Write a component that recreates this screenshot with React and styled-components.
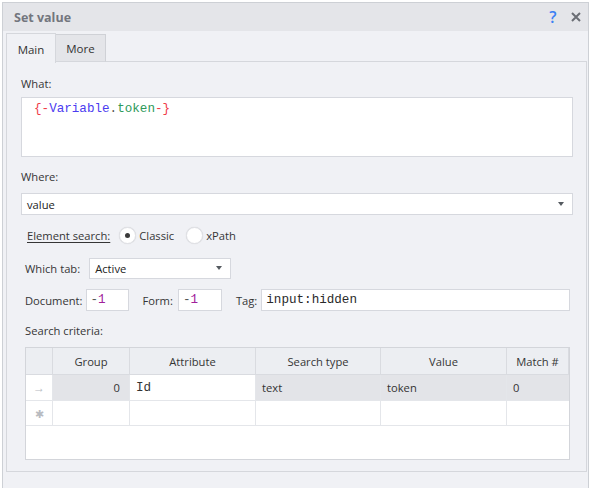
import React from 'react';
import styled, { createGlobalStyle } from 'styled-components';

const GlobalStyle = createGlobalStyle`
  html, body { margin: 0; padding: 0; background: #ffffff; }
  body {
    font-family: "Open Sans", "Noto Sans", sans-serif;
    font-size: 11.2px;
    color: #353535;
  }
  #root { width: 592px; height: 488px; overflow: hidden; }
  * { box-sizing: border-box; }
`;

const Window = styled.div`
  margin: 2px 0 0 2px;
  width: 587px;
  height: 486px;
  border: 1px solid #cdd0d5;
  border-bottom: none;
  background: #f0f1f5;
  display: flex;
  flex-direction: column;
`;

const TitleBar = styled.div`
  height: 28px;
  background: #e4e5e9;
  display: flex;
  align-items: center;
  padding: 0 5px 0 11px;
`;

const Title = styled.div`
  font-weight: 700;
  font-size: 12.5px;
  color: #73767e;
  flex: 1;
`;

const TitleButton = styled.span`
  display: flex;
  align-items: center;
  justify-content: center;
  width: ${p => p.$w || 16}px;
  height: 18px;
  margin-left: ${p => p.$ml || 0}px;
  color: ${p => p.$color};
  font-size: 16px;
  font-weight: 600;
`;

const TabStrip = styled.div`
  display: flex;
  align-items: flex-end;
  padding: 1px 0 0 3px;
  height: 31px;
  position: relative;
  z-index: 1;
`;

const Tab = styled.div`
  width: 50px;
  height: ${p => (p.$active ? 30 : 28)}px;
  display: flex;
  align-items: center;
  justify-content: center;
  padding-top: ${p => (p.$active ? 1 : 0)}px;
  background: ${p => (p.$active ? '#f0f1f5' : '#e4e5e9')};
  border: 1px solid ${p => (p.$active ? '#d5d7dc' : '#cfd1d6')};
  border-bottom: ${p => (p.$active ? 'none' : '1px solid #d5d7dc')};
  border-left: ${p => (p.$active ? '1px solid #d5d7dc' : 'none')};
  margin-bottom: ${p => (p.$active ? -1 : 0)}px;
  color: #333;
  font-size: 11.5px;
`;

const Panel = styled.div`
  margin: -1px 1px 0 3px;
  height: 411px;
  border: 1px solid #d5d7dc;
  padding: 14px 13px 0 14px;
  display: flex;
  flex-direction: column;
`;

const Label = styled.div`
  line-height: 16px;
  height: 16px;
  margin-top: ${p => p.$mt || 0}px;
  color: #353535;
`;

const TextArea = styled.div`
  margin-top: 5px;
  height: 60px;
  background: #ffffff;
  border: 1px solid #d6d8de;
  padding: 4px 12px;
  font-family: "Liberation Mono", "Courier New", monospace;
  font-size: 12.6px;
  line-height: 14px;
`;

const Tok = styled.span`
  color: ${p => p.$c};
`;

const Select = styled.div`
  margin-top: ${p => p.$mt || 0}px;
  width: ${p => (p.$w ? `${p.$w}px` : 'auto')};
  height: ${p => p.$h || 22}px;
  background: #ffffff;
  border: 1px solid #d6d8de;
  display: flex;
  align-items: center;
  padding: 0 8px 0 5px;
  color: #222;
`;

const SelectText = styled.span`
  flex: 1;
`;

const Arrow = styled.span`
  width: 0;
  height: 0;
  border-left: 3.5px solid transparent;
  border-right: 3.5px solid transparent;
  border-top: 4px solid #555a60;
`;

const Indented = styled.div`
  margin: 0 3px 0 4px;
  display: flex;
  flex-direction: column;
`;

const SearchRow = styled.div`
  margin-top: 10px;
  margin-left: 2px;
  height: 20px;
  display: flex;
  align-items: center;
`;

const Underlined = styled.span`
  text-decoration: underline;
  text-underline-offset: 2px;
  color: #353535;
  margin-right: 9px;
`;

const Radio = styled.span`
  width: 17px;
  height: 17px;
  border-radius: 50%;
  background: #ffffff;
  border: 1px solid #e0e1e5;
  box-shadow: 0 0 1px rgba(0, 0, 0, 0.15);
  display: flex;
  align-items: center;
  justify-content: center;
  margin-right: 3px;
  &::after {
    content: '';
    display: ${p => (p.$checked ? 'block' : 'none')};
    width: 5px;
    height: 5px;
    border-radius: 50%;
    background: #3a3a3a;
  }
`;

const RadioLabel = styled.span`
  margin-right: 12px;
  color: #353535;
`;

const FieldRow = styled.div`
  margin-top: ${p => p.$mt || 0}px;
  display: flex;
  align-items: center;
  height: 22px;
`;

const FieldLabel = styled.span`
  margin-right: ${p => p.$mr || 6}px;
  margin-left: ${p => p.$ml || 0}px;
  color: #353535;
`;

const Input = styled.div`
  width: ${p => (p.$w ? `${p.$w}px` : 'auto')};
  flex: ${p => (p.$grow ? 1 : 'none')};
  height: 22px;
  background: #ffffff;
  border: 1px solid #d6d8de;
  display: flex;
  align-items: center;
  padding: 0 4px;
  font-family: "Liberation Mono", "Courier New", monospace;
  font-size: 12.6px;
  color: #2a2a2a;
`;

const Table = styled.div`
  margin-top: 8px;
  height: 113px;
  background: #ffffff;
  border: 1px solid #d3d5da;
  display: grid;
  grid-template-columns: 27px 77px 126px 125px 126px 1fr;
  grid-template-rows: 27px 26px 25px;
  align-content: start;
`;

const HeadCell = styled.div`
  background: #eceef2;
  border-right: 1px solid #d9dbe0;
  border-bottom: 1px solid #d9dbe0;
  display: flex;
  align-items: center;
  justify-content: center;
  color: #353535;
  &:last-child { border-right: none; }
`;

const Cell = styled.div`
  background: ${p => (p.$sel ? '#e3e4e8' : '#ffffff')};
  border-right: ${p => (p.$last ? 'none' : '1px solid #e4e6ea')};
  border-bottom: 1px solid #e4e6ea;
  display: flex;
  align-items: center;
  justify-content: ${p => (p.$right ? 'flex-end' : p.$center ? 'center' : 'flex-start')};
  padding: 0 ${p => (p.$right ? 9 : 6)}px 0 6px;
  color: #333;
  font-family: ${p => (p.$mono ? '"Liberation Mono", "Courier New", monospace' : 'inherit')};
  font-size: ${p => (p.$mono ? '12.6px' : 'inherit')};
`;

const Indicator = styled.span`
  color: #b8bbc1;
  font-size: ${p => p.$size || 12}px;
`;

export default function App() {
  return (
    <>
      <GlobalStyle />
      <Window>
        <TitleBar>
          <Title>Set value</Title>
          <TitleButton $color="#3c80f4">?</TitleButton>
          <TitleButton $ml={8} $w={14}>
            <svg width="10" height="10" viewBox="0 0 10 10">
              <path d="M1 1 L9 9 M9 1 L1 9" stroke="#6b6e75" strokeWidth="2" />
            </svg>
          </TitleButton>
        </TitleBar>
        <TabStrip>
          <Tab $active>Main</Tab>
          <Tab>More</Tab>
        </TabStrip>
        <Panel>
          <Label>What:</Label>
          <TextArea>
            <Tok $c="#f03a4a">{'{-'}</Tok>
            <Tok $c="#4b3cf0">Variable</Tok>
            <Tok $c="#555">.</Tok>
            <Tok $c="#2e9a5a">token</Tok>
            <Tok $c="#f03a4a">{'-}'}</Tok>
          </TextArea>
          <Label $mt={12}>Where:</Label>
          <Select $mt={8}>
            <SelectText>value</SelectText>
            <Arrow />
          </Select>
          <Indented>
            <SearchRow>
              <Underlined>Element search:</Underlined>
              <Radio $checked />
              <RadioLabel>Classic</RadioLabel>
              <Radio />
              <RadioLabel>xPath</RadioLabel>
            </SearchRow>
            <FieldRow $mt={12}>
              <FieldLabel $mr={9}>Which tab:</FieldLabel>
              <Select $w={142} $h={21}>
                <SelectText>Active</SelectText>
                <Arrow />
              </Select>
            </FieldRow>
            <FieldRow $mt={10}>
              <FieldLabel $mr={3}>Document:</FieldLabel>
              <Input $w={43}>
                <Tok $c="#555">-</Tok>
                <Tok $c="#a0209a">1</Tok>
              </Input>
              <FieldLabel $ml={14} $mr={5}>Form:</FieldLabel>
              <Input $w={44}>
                <Tok $c="#555">-</Tok>
                <Tok $c="#a0209a">1</Tok>
              </Input>
              <FieldLabel $ml={14} $mr={4}>Tag:</FieldLabel>
              <Input $grow>input:hidden</Input>
            </FieldRow>
            <Label $mt={12}>Search criteria:</Label>
            <Table>
              <HeadCell />
              <HeadCell>Group</HeadCell>
              <HeadCell>Attribute</HeadCell>
              <HeadCell>Search type</HeadCell>
              <HeadCell>Value</HeadCell>
              <HeadCell>Match #</HeadCell>

              <Cell $center><Indicator>→</Indicator></Cell>
              <Cell $sel $right>0</Cell>
              <Cell $mono>Id</Cell>
              <Cell $sel>text</Cell>
              <Cell $sel>token</Cell>
              <Cell $sel $last>0</Cell>

              <Cell $center><Indicator $size={11}>✱</Indicator></Cell>
              <Cell />
              <Cell />
              <Cell />
              <Cell />
              <Cell $last />
            </Table>
          </Indented>
        </Panel>
      </Window>
    </>
  );
}
